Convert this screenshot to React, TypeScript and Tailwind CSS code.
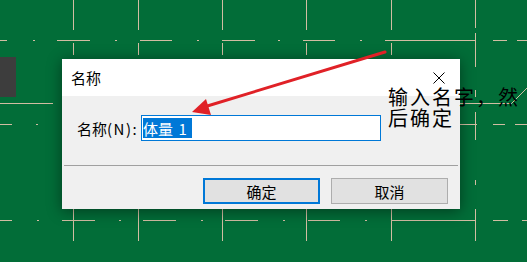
import React from 'react';

// CAD canvas behind the dialog: axis lines drawn as explicit segments
const hSegs: [number, number, number][] = [
  // y, x1, x2
  [40, 0, 7], [40, 33, 35], [40, 57, 90], [40, 115, 117], [40, 140, 172], [40, 197, 199], [40, 222, 255],
  [40, 278, 280], [40, 303, 335], [40, 360, 362], [40, 385, 476], [40, 493, 507], [40, 517, 527],
  [103, 0, 53], [103, 460, 512],
  [124, 0, 12], [124, 36, 38], [124, 460, 477], [124, 493, 505], [124, 515, 527],
  [220, 0, 12], [220, 37, 39], [220, 62, 95], [220, 119, 121], [220, 143, 176], [220, 201, 203], [220, 225, 258],
  [220, 283, 285], [220, 308, 340], [220, 365, 367], [220, 391, 475], [220, 493, 508], [220, 522, 527],
];

const vXs = [73, 138, 222, 306, 391];
const vSegs: [number, number][] = [[0, 30], [43, 55], [209, 241]];
const rightV: [number, number][] = [[0, 28], [33, 67], [90, 97], [112, 140], [180, 185], [209, 241]];

const Canvas: React.FC = () => (
  <svg className="absolute inset-0" width="527" height="262" viewBox="0 0 527 262">
    <rect x="0" y="57" width="16" height="40" fill="#3d3d3d" />
    <g stroke="#d2bda2" strokeWidth="1" shapeRendering="crispEdges">
      {hSegs.map(([y, x1, x2], i) => (
        <line key={'h' + i} x1={x1} y1={y + 0.5} x2={x2} y2={y + 0.5} />
      ))}
      {vXs.map((x) =>
        vSegs.map(([y1, y2], j) => <line key={'v' + x + '-' + j} x1={x + 0.5} y1={y1} x2={x + 0.5} y2={y2} />)
      )}
      {rightV.map(([y1, y2], j) => (
        <line key={'r' + j} x1={475.5} y1={y1} x2={475.5} y2={y2} />
      ))}
    </g>
    <line x1="512" y1="103" x2="527" y2="88" stroke="#d2bda2" strokeWidth="1" />
  </svg>
);

const App: React.FC = () => {
  return (
    <div className="relative w-[527px] h-[262px] overflow-hidden bg-[#026d38] font-['Noto_Sans_CJK_SC','Noto_Sans',sans-serif] text-black">
      <Canvas />

      {/* dialog */}
      <div className="absolute left-[62px] top-[59px] w-[398px] h-[150px] flex flex-col shadow-[0_2px_14px_rgba(0,0,0,0.45)]">
        <div className="h-[37px] bg-white flex items-center justify-between pl-[9px] pr-[15px]">
          <span className="text-[15px] leading-none">名称</span>
          <svg width="12" height="12" viewBox="0 0 12 12">
            <path d="M0.5 0.5L11.5 11.5M11.5 0.5L0.5 11.5" stroke="#000" strokeWidth="1" />
          </svg>
        </div>
        <div className="flex-1 bg-[#f0f0f0] flex flex-col">
          <div className="flex items-center mt-[19px] pl-[15px]">
            <span className="w-[64px] text-[15px] leading-none">
              名称<span className="tracking-[1.5px]">(N):</span>
            </span>
            <div className="w-[240px] h-[26px] border border-[#0078d7] bg-white flex items-center pl-[1px]">
              <span className="inline-flex items-center w-[49px] h-[20px] bg-[#0078d7] text-white text-[15px] leading-none whitespace-pre">
                体量<span className="tracking-[2px]"> </span>1
              </span>
            </div>
          </div>
          <div className="mt-[24px] mx-[2px] border-t border-[#a0a0a0]" />
          <div className="mt-[12px] flex justify-end gap-[11px] pr-[12px]">
            <button className="w-[117px] h-[26px] border-2 border-[#0078d7] bg-[#e1e1e1] text-[15px] leading-none flex items-center justify-center">
              确定
            </button>
            <button className="w-[117px] h-[26px] border border-[#adadad] bg-[#e1e1e1] text-[15px] leading-none flex items-center justify-center">
              取消
            </button>
          </div>
        </div>
      </div>

      {/* red annotation arrow */}
      <svg className="absolute inset-0 pointer-events-none" width="527" height="262" viewBox="0 0 527 262">
        <line x1="385" y1="52" x2="204" y2="107" stroke="#e02127" strokeWidth="3" strokeLinecap="round" />
        <polygon points="192,112 206,99 211,115" fill="#e02127" />
      </svg>

      {/* annotation text */}
      <div className="absolute left-[388px] top-[86px] text-[20px] tracking-[2px] leading-[21px] whitespace-nowrap">
        输入名字，然
        <br />
        后确定
      </div>
    </div>
  );
};

export default App;
